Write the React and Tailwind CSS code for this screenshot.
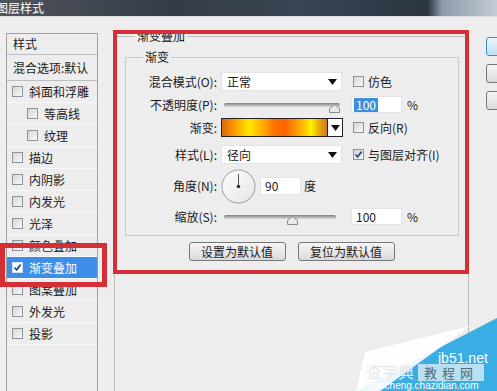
import React from 'react';

const Check = ({ checked, dark }) => (
  <span
    className={`w-[11px] h-[11px] shrink-0 border flex items-center justify-center ${
      dark ? 'border-[#d0e0f0] bg-white' : 'border-[#8f9296] bg-[linear-gradient(135deg,#d6d6d6,#f8f8f8)]'
    }`}
  >
    {checked && (
      <svg width="9" height="9" viewBox="0 0 9 9">
        <path d="M1.5 4.5 L3.6 6.8 L7.6 1.6" fill="none" stroke="#2b4f8f" strokeWidth="1.8" />
      </svg>
    )}
  </span>
);

const ListItem = ({ label, indent, selected, checked }) => (
  <div
    className={`h-[22px] flex items-center gap-[6px] border-b border-[#f9f9f9] whitespace-nowrap ${indent ? 'pl-[20px]' : 'pl-[5px]'} ${
      selected ? 'bg-[#3d8ee8] text-white' : ''
    }`}
  >
    <Check checked={checked} dark={selected} />
    <span>{label}</span>
  </div>
);

const Arrow = () => (
  <svg width="9" height="6" viewBox="0 0 9 6">
    <path d="M0 0 H9 L4.5 6 Z" fill="#111" />
  </svg>
);

const Thumb = () => (
  <svg width="11" height="9" viewBox="0 0 11 9">
    <path d="M0.5 8.5 V4.5 L5.5 0.5 L10.5 4.5 V8.5 Z" fill="#e8e8e8" stroke="#8a8a8a" />
  </svg>
);

const Label = ({ children }) => <div className="w-[92px] shrink-0 text-right pr-[1px] whitespace-nowrap">{children}</div>;

export default function App() {
  return (
    <div className="relative w-[497px] h-[391px] overflow-hidden bg-[#eeeded] text-[12px] leading-[14px] text-[#1a1a1a] font-['Noto_Sans_CJK_SC','Liberation_Sans',sans-serif]">
      {/* title bar */}
      <div className="h-[17px] border-b border-[#d9dee4] bg-[linear-gradient(to_right,#50545b_0%,#343c47_35%,#3a4553_60%,#2b3542_86%,#8d9aa8_89%,#c4ccd4_100%)] text-white flex items-center">
        <span className="-ml-[4px]">图层样式</span>
      </div>

      <div className="flex items-start w-[600px]">
        {/* left list */}
        <div className="shrink-0 ml-[6px] mt-[16px] w-[92px] h-[400px] border border-[#a3a3a3]">
          <div className="h-[21px] flex items-center pl-[6px] border-b border-[#bdbdbd]">样式</div>
          <div className="h-[26px] flex items-center pl-[6px] border-b border-[#bdbdbd] whitespace-nowrap">混合选项:默认</div>
          <ListItem label="斜面和浮雕" />
          <ListItem label="等高线" indent />
          <ListItem label="纹理" indent />
          <ListItem label="描边" />
          <ListItem label="内阴影" />
          <ListItem label="内发光" />
          <ListItem label="光泽" />
          <ListItem label="颜色叠加" />
          <ListItem label="渐变叠加" selected checked />
          <ListItem label="图案叠加" />
          <ListItem label="外发光" />
          <ListItem label="投影" />
        </div>

        {/* main */}
        <fieldset className="shrink-0 ml-[16px] mt-[12px] w-[355px] h-[420px] border border-[#bdbdbd]">
          <legend className="ml-[20px] px-[2px]">渐变叠加</legend>
          <fieldset className="ml-[10px] mt-[7px] w-[334px] border border-[#c9c9c9] pb-[9px]">
            <legend className="ml-[17px] px-[2px]">渐变</legend>

            <div className="mt-[8px] h-[19px] flex items-center">
              <Label>混合模式(O):</Label>
              <div className="shrink-0 ml-[3px] w-[121px] h-[19px] bg-white border border-[#e2e2e2] flex items-center justify-between pl-[5px] pr-[4px]">
                <span>正常</span>
                <Arrow />
              </div>
              <div className="ml-[11px] flex items-center gap-[4px] whitespace-nowrap">
                <Check />
                <span>仿色</span>
              </div>
            </div>

            <div className="mt-[4px] h-[19px] flex items-center">
              <Label>不透明度(P):</Label>
              <div className="shrink-0 relative ml-[6px] w-[116px] h-[19px] flex items-center">
                <div className="w-full h-[4px] rounded-full bg-[linear-gradient(#9a9a9a,#d8d8d8)] border-t border-[#8c8c8c]" />
                <div className="absolute left-[105px] top-[9px]">
                  <Thumb />
                </div>
              </div>
              <div className="shrink-0 ml-[11px] w-[51px] h-[17px] bg-white border border-[#e4e4e4] flex items-center pl-[2px]">
                <span className="bg-[#3b8fdc] text-white px-[2px]">100</span>
              </div>
              <span className="ml-[5px]">%</span>
            </div>

            <div className="mt-[4px] h-[19px] flex items-center">
              <Label>渐变:</Label>
              <div className="shrink-0 ml-[3px] w-[107px] h-[19px] border border-[#222] bg-[linear-gradient(to_right,#d86a10_0%,#ff9800_12%,#ffe800_26%,#ffb000_38%,#ff7000_50%,#ff6200_60%,#ffa800_74%,#fff000_85%,#f0a010_93%,#c87828_100%)]" />
              <div className="shrink-0 w-[15px] h-[19px] border border-l-0 border-[#222] bg-white flex items-center justify-center">
                <Arrow />
              </div>
              <div className="ml-[10px] flex items-center gap-[4px] whitespace-nowrap">
                <Check />
                <span>反向(R)</span>
              </div>
            </div>

            <div className="mt-[8px] h-[19px] flex items-center">
              <Label>样式(L):</Label>
              <div className="shrink-0 ml-[3px] w-[121px] h-[19px] bg-white border border-[#e2e2e2] flex items-center justify-between pl-[5px] pr-[4px]">
                <span>径向</span>
                <Arrow />
              </div>
              <div className="ml-[11px] flex items-center gap-[4px] whitespace-nowrap">
                <Check checked />
                <span>与图层对齐(I)</span>
              </div>
            </div>

            <div className="mt-[5px] h-[34px] flex items-center">
              <Label>角度(N):</Label>
              <svg className="ml-[3px] shrink-0" width="35" height="35" viewBox="0 0 35 35">
                <defs>
                  <linearGradient id="dial" x1="0" y1="0" x2="1" y2="1">
                    <stop offset="0" stopColor="#ffffff" />
                    <stop offset="1" stopColor="#e4e4e4" />
                  </linearGradient>
                </defs>
                <circle cx="17.5" cy="17.5" r="16.5" fill="url(#dial)" stroke="#9b9b9b" />
                <line x1="17.5" y1="17.5" x2="17.5" y2="5" stroke="#555" strokeWidth="1" />
                <circle cx="17.5" cy="17.5" r="1.8" fill="#333" />
              </svg>
              <div className="shrink-0 ml-[4px] w-[41px] h-[18px] bg-white border border-[#e4e4e4] flex items-center pl-[4px]">90</div>
              <span className="ml-[3px]">度</span>
            </div>

            <div className="mt-[4px] h-[19px] flex items-center">
              <Label>缩放(S):</Label>
              <div className="shrink-0 relative ml-[6px] w-[112px] h-[19px] flex items-center">
                <div className="w-full h-[4px] rounded-full bg-[linear-gradient(#9a9a9a,#d8d8d8)] border-t border-[#8c8c8c]" />
                <div className="absolute left-[63px] top-[9px]">
                  <Thumb />
                </div>
              </div>
              <div className="shrink-0 ml-[15px] w-[51px] h-[17px] bg-white border border-[#e4e4e4] flex items-center pl-[4px]">100</div>
              <span className="ml-[5px]">%</span>
            </div>
          </fieldset>

          <div className="mt-[6px] flex justify-center gap-[12px]">
            <button className="w-[97px] h-[19px] rounded-[3px] border border-[#777] bg-[linear-gradient(#f6f6f6,#dadada)] text-[12px] leading-[14px]">
              设置为默认值
            </button>
            <button className="w-[97px] h-[19px] rounded-[3px] border border-[#777] bg-[linear-gradient(#f6f6f6,#dadada)] text-[12px] leading-[14px]">
              复位为默认值
            </button>
          </div>
        </fieldset>

        {/* right buttons (cut off) */}
        <div className="ml-[17px] mt-[20px] flex flex-col gap-[8px] shrink-0">
          <div className="w-[70px] h-[19px] rounded-[3px] border border-[#3c8fc8] bg-[linear-gradient(#eaf6fd,#bfe0f4)]" />
          <div className="w-[70px] h-[19px] rounded-[3px] border border-[#777] bg-[linear-gradient(#f6f6f6,#dadada)]" />
          <div className="w-[70px] h-[19px] rounded-[3px] border border-[#777] bg-[linear-gradient(#f6f6f6,#dadada)]" />
        </div>
      </div>

      {/* annotation boxes */}
      <div className="absolute left-[113px] top-[30px] w-[356px] h-[244px] border-[4px] border-[#d42f36]" />
      <div className="absolute left-0 top-[243px] w-[107px] h-[44px] border-[5px] border-[#d42f36]" />

      {/* watermark */}
      <svg className="absolute left-[340px] top-[310px]" width="157" height="81" viewBox="0 0 157 81">
        <polygon points="157,8 157,81 16,81" fill="#3aaee4" />
        <polygon points="25,42 130,16 40,81 16,81" fill="#ffffff" opacity="0.9" />
      </svg>
      <div className="absolute left-[438px] top-[350px] text-white text-[14px] leading-[16px] font-['Liberation_Sans',sans-serif]">jb51.net</div>
      <div className="absolute left-[418px] top-[364px] w-[66px] h-[17px] bg-[#b9dff2] text-[#4a6a80] text-[13px] leading-[17px] text-center tracking-[5px]">教程网</div>
      <div className="absolute left-[366px] top-[362px] text-[#e8e8e8] text-[16px] leading-[18px]">查字典</div>
      <div className="absolute left-[369px] top-[380px] text-white text-[10px] leading-[11px] font-['Liberation_Sans',sans-serif]">jiaocheng.chazidian.com</div>
    </div>
  );
}
